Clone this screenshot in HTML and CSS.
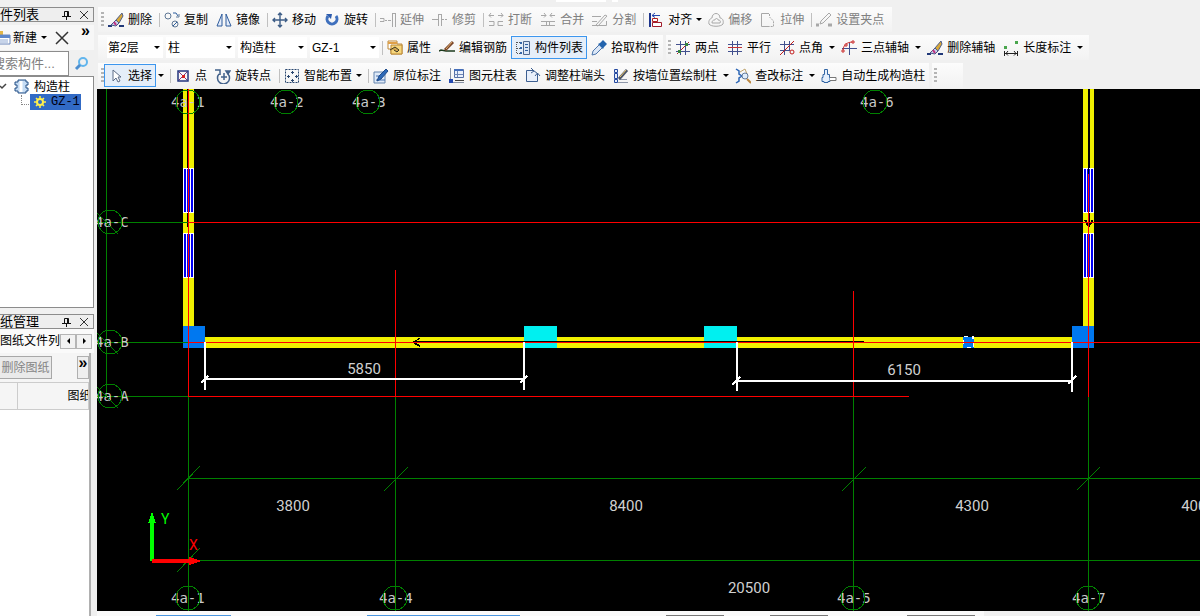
FILE: index.html
```html
<!DOCTYPE html>
<html lang="zh-CN">
<head>
<meta charset="utf-8">
<title>构造柱</title>
<link rel="stylesheet" href="styles.css">
</head>
<body>
<svg class="defs" aria-hidden="true">
  <symbol id="brush" viewBox="0 0 16 16"><path d="M0 14h4M11 14h5" stroke="#203878" stroke-width="2"/><path d="M3 13l5-5 3 3-3 3z" fill="#c9cfe6" stroke="#4a5788"/><path d="M6 10l2 3" stroke="#c03080" stroke-width="2"/><path d="M8 8l6-7 1 3-4 7z" fill="#d8a838" stroke="#50608c"/></symbol>
  <symbol id="copy" viewBox="0 0 16 16" fill="none" stroke="#5f7896"><circle cx="4" cy="4" r="3"/><circle cx="11" cy="12" r="3"/><path d="M9 14l4-4M9 1h3l2 3" stroke="#2e5f9f"/><path d="M12 5h3V2"/></symbol>
  <symbol id="mirror" viewBox="0 0 16 16" fill="#e4ecfa" stroke="#2f5c9c"><path d="M6 2v12H1zM10 2v12h5z"/></symbol>
  <symbol id="move" viewBox="0 0 16 16" fill="none" stroke="#3c5c86" stroke-width="1.4"><path d="M8 1v14M1 8h14M6 3l2-2 2 2M6 13l2 2 2-2M3 6L1 8l2 2M13 6l2 2-2 2"/></symbol>
  <symbol id="rotate" viewBox="0 0 16 16" fill="none" stroke="#3f70bd" stroke-width="3"><path d="M4 4a5 5 0 1 0 8 0"/><path d="M2 2l6 0-1 5z" fill="#2c5bac" stroke="none"/></symbol>
  <symbol id="extend" viewBox="0 0 16 16" fill="none" stroke="#a8a8a8"><path d="M0 6.500h4v3H0M5 8.500h2M8 8.500h3M12.500 1v14M15.500 1v14M12 1.500h3"/></symbol>
  <symbol id="trim" viewBox="0 0 16 16" fill="none" stroke="#a8a8a8"><path d="M0 7.500h6M6.500 2v12M9.500 2v12M10 7.500h2M13 7.500h2M6 2.500h3"/></symbol>
  <symbol id="break" viewBox="0 0 16 16" fill="none" stroke="#a8a8a8"><path d="M1 3.500h5M3 1L1 3.500l2 2M10 3.500h5M13 1l2 2.500-2 2M1 9.500h5v4H1M15 9.500h-5v4h5"/></symbol>
  <symbol id="join" viewBox="0 0 16 16" fill="none" stroke="#a8a8a8"><path d="M1 3.500h5M4 1l2 2.500-2 2M10 3.500h5M12 1l-2 2.500 2 2M1 9.500h14M1 13.500h14M6.500 9v4M9.500 9v4"/></symbol>
  <symbol id="split" viewBox="0 0 16 16" fill="none" stroke="#a8a8a8"><path d="M0 4.500h9M0 9.500h5M0 13.500h14.500V9M4 13L13 3l2 1L6 14z"/></symbol>
  <symbol id="align" viewBox="0 0 16 16" fill="none"><path d="M2 1v14" stroke="#1d348c" stroke-width="2"/><path d="M4 3.500h8M7 1L4 3.500l3 2" stroke="#2749b0"/><path d="M4.500 6.500h5v3h-5z" fill="#fff" stroke="#b02020"/><path d="M4.500 10.500h9v4h-9z" fill="#fff" stroke="#a01c2c"/></symbol>
  <symbol id="offset" viewBox="0 0 16 16" fill="none" stroke="#a8a8a8"><path d="M1 12c-1-4 2-6 3-6 0-6 8-6 8 0 2 0 4 2 3 6-2 3-12 3-14 0z"/><path d="M4 11c0-3 2-3 3-3 0-2 3-2 3 0 2 0 3 1 2 3z"/></symbol>
  <symbol id="stretch" viewBox="0 0 16 16" fill="none" stroke="#a8a8a8"><path d="M9 1.500H1.500v13H8"/><path d="M9.500 2v3l4 4v5.500H8" stroke-dasharray="2 1"/></symbol>
  <symbol id="grippt" viewBox="0 0 16 16" fill="none" stroke="#a8a8a8"><path d="M0 13h3M12 13h4" stroke-width="3"/><path d="M4 12l1-3 8-8 2 2-8 8z"/></symbol>
  <symbol id="prop" viewBox="0 0 16 16"><path d="M1 1h9v3h5v10H4V9H1z" fill="#fff" stroke="#c08a38"/><path d="M1 2h9v2H1z" fill="#e0a048"/><path d="M4 5h11v9H4z" fill="#f7d67c" stroke="#b98835"/><path d="M3 10l5-3 4 3-2 2-3-2" fill="#d0a54c" stroke="#3d3825"/></symbol>
  <symbol id="rebar" viewBox="0 0 16 16" fill="none"><path d="M0 11l2-1 5 1h9" stroke="#1d3a1d" stroke-width="1.500"/><path d="M6 10L14 2" stroke="#78452a" stroke-width="3"/><path d="M7 9l6-7" stroke="#e2b06e"/></symbol>
  <symbol id="list" viewBox="0 0 16 16" fill="none"><path d="M1.500 2v12M2 2.500h3M2 8.500h3M2 13.500h3" stroke="#555" stroke-dasharray="1 1"/><path d="M5 3h2M5 8h2M5 13h2" stroke="#3566a8" stroke-width="2"/><path d="M8.500 1.500h6v13h-6z" fill="#dce7f7" stroke="#50688e"/><path d="M10 4.500h3M10 7.500h3M10 10.500h3" stroke="#2e5f9f"/></symbol>
  <symbol id="pick" viewBox="0 0 16 16"><path d="M1 15l1-4 7-7 3 3-7 7z" fill="#dbe7f7" stroke="#4d76ac"/><path d="M7 4l2-1 3-3 4 4-3 3-1 2z" fill="#2464ad"/></symbol>
  <symbol id="twopt" viewBox="0 0 16 16" fill="none" stroke="#42508e"><path d="M1 4.500h14M1 11.500h14M5.500 1v14M10.500 1v14"/><path d="M2 14L14 2" stroke="#b52323"/><path d="M3 10h3v3H3zM10 3h3v3h-3z" fill="#37833b" stroke="none"/></symbol>
  <symbol id="parallel" viewBox="0 0 16 16" fill="none" stroke="#42508e"><path d="M5.500 1v14M10.500 1v14M1 4.500h14M1 11.500h14"/><path d="M1 7.500h14" stroke="#c63333"/></symbol>
  <symbol id="ptangle" viewBox="0 0 16 16" fill="none" stroke="#42508e"><path d="M1 4.500h14M1 10.500h10M5.500 1v14M10.500 1v9"/><path d="M1 15L15 1" stroke="#c21c1c"/><circle cx="13" cy="12" r="2" stroke="#c21c1c"/></symbol>
  <symbol id="threept" viewBox="0 0 16 16" fill="none" stroke="#42508e"><path d="M1 8.500h15M8.500 3v12"/><path d="M2 11C2 5 6 2 12 2" stroke="#c92a2a"/><path d="M1 10h2v2H1zM4 4h2v2H4zM11 1h2v2h-2z" fill="#fff" stroke="#c92a2a"/></symbol>
  <symbol id="length" viewBox="0 0 16 16" fill="none"><path d="M1 6h3v3H1zM12 1h3v3h-3z" fill="#4aa64e"/><path d="M1.500 11v5M14.500 11v5M2 13.500h13M5 11l-2 2.500 2 2M11 11l2 2.500-2 2" stroke="#222"/></symbol>
  <symbol id="cursor" viewBox="0 0 16 16"><path d="M5 2v11l3-3 2 4 2-1-2-4h3z" fill="#fff" stroke="#5d6c86"/></symbol>
  <symbol id="point" viewBox="0 0 16 16" fill="none"><path d="M3 3h10v10H3z" stroke="#23357e" stroke-width="1.5"/><path d="M4 4l8 8M12 4l-8 8" stroke="#7d3a7e"/><path d="M7 7h3v3H7z" fill="#d82222"/></symbol>
  <symbol id="rotpt" viewBox="0 0 16 16" fill="none" stroke="#42618b" stroke-width="1.5"><path d="M4 6a6 6 0 1 0 9 0M0 2h5v5M9 5v7M6 9h6"/><path d="M13 6l-2-3 4 0z" fill="#42618b"/></symbol>
  <symbol id="smart" viewBox="0 0 16 16" fill="none" stroke="#29466f"><path d="M1.500 1.500h13v13h-13z" stroke-dasharray="2 1"/><path d="M7 4.500h3M8.500 3v3M3 8.500h3M4.500 7v3M11 8.500h3M12.500 7v3M7 12.500h3M8.500 11v3"/></symbol>
  <symbol id="origin" viewBox="0 0 16 16"><path d="M1 4h11v11H1z" fill="#dfeaf8" stroke="#6584ad"/><path d="M3 12h9M3 8h4" stroke="#4570b0"/><path d="M4 13l2-5 7-7 2 2-7 8z" fill="#2d69b7" stroke="#204c8b"/></symbol>
  <symbol id="coltable" viewBox="0 0 16 16"><path d="M1.500 0v14.500H15" fill="none" stroke="#8792a5"/><path d="M5.500 1.500h9v8h-9z" fill="#e9f0fc" stroke="#5670a5"/><path d="M5 1h9v2H5z" fill="#4670bb"/><path d="M8.500 3v6M5 6.500h9" stroke="#6e86b5"/><path d="M0 11h4v4H0z" fill="#2449b0"/><path d="M6 12.500h9" stroke="#444"/></symbol>
  <symbol id="adjust" viewBox="0 0 16 16" fill="#e9f0fb" stroke="#3d5f91"><path d="M1.500 2.500h7l4 3v8h-11z"/><path d="M6 0l3 3-3 2M10 8l2.500-3L15 8" fill="none"/></symbol>
  <symbol id="wallcol" viewBox="0 0 16 16"><path d="M1.500 1.500h3v3h-3zM1.500 5.500h3v5h-3zM1.500 11.500h3v3h-3z" fill="#e6eefb" stroke="#2449a0"/><path d="M5 14.500h10M6 11.500h8" stroke="#8d96a8"/><path d="M6 11L14 2" stroke="#4b5568" stroke-width="3"/><path d="M7 9l6-7" stroke="#efc96c"/></symbol>
  <symbol id="check" viewBox="0 0 16 16" fill="none"><path d="M1 1l3 2v3l3 2-3 2v3l-3 2" stroke="#2b65b5" stroke-width="1.5"/><path d="M5 4l5-3 2 5" stroke="#bfa46e"/><circle cx="10" cy="8" r="3" fill="#e0edfb" stroke="#637c9d"/><path d="M12 11l4 4" stroke="#bb8740" stroke-width="2"/></symbol>
  <symbol id="auto" viewBox="0 0 16 16" fill="#e4effc" stroke="#3366a5"><path d="M3.500 1.500h3v5h2v3H9v4H7v1H3v-1H1v-4h1v-3h1.500z"/><path d="M9 9.500h6v3H9" stroke="#777" fill="#fff"/></symbol>
  <symbol id="new" viewBox="0 0 16 16"><path d="M0 1h7v5H0z" fill="#e2b649"/><path d="M2 5h12v9H2z" fill="#fff" stroke="#6b86bb"/><path d="M2 5h12v3H2z" fill="#5e87cc"/><path d="M4 10h8M4 12h8" stroke="#8ea8d4"/></symbol>
  <symbol id="lens" viewBox="0 0 16 16" fill="none"><circle cx="9" cy="6" r="4" stroke="#61b5ed" stroke-width="2"/><path d="M6 9l-4 4" stroke="#4d8fd0" stroke-width="3"/></symbol>
  <symbol id="column" viewBox="0 0 16 16" fill="#c5dcf4" stroke="#234f85"><path d="M5 1h8v2h2v3h-2v3h2v3h-2v2H5v-2H2V9h2V6H2V3h3z"/><path d="M8 2v11" stroke="#fff" stroke-width="3"/></symbol>
  <symbol id="gear" viewBox="0 0 16 16" fill="none" stroke="#fff04c"><circle cx="8" cy="8" r="3" stroke-width="2"/><path d="M8 2v3M8 11v3M2 8h3M11 8h3M4 4l2 2M12 4l-2 2M4 12l2-2M12 12l-2-2" stroke-width="1.5"/></symbol>
  <symbol id="pin" viewBox="0 0 12 12" fill="none" stroke="#111"><path d="M4.500 2.500h4v5h-4zM2 7.500h9M6.500 7v4M7.500 2v5"/></symbol>
  <symbol id="close" viewBox="0 0 12 12"><path d="M2 2l8 8M10 2l-8 8" stroke="#333"/></symbol>
</svg>
<div class="app">
  <aside class="side">
    <section class="panel upper">
      <header class="title"><h2>件列表</h2><button aria-label="固定"><svg><use href="#pin"/></svg></button><button aria-label="关闭"><svg><use href="#close"/></svg></button></header>
      <div class="tools"><svg class="ic"><use href="#new"/></svg><button class="dd">新建</button><button class="del" aria-label="删除构件"><svg class="ic"><use href="#close"/></svg></button><button class="more" aria-label="更多">»</button></div>
      <div class="search"><input type="text" aria-label="搜索构件" placeholder="搜索构件..."><button aria-label="搜索"><svg class="ic"><use href="#lens"/></svg></button></div>
      <ul class="tree">
        <li><svg class="tick" viewBox="0 0 8 8"><path d="M0 3l2 2 4-4" fill="none" stroke="#444" stroke-width="1.5"/></svg><svg class="ic"><use href="#column"/></svg>构造柱</li>
        <li class="leaf"><span class="branch"></span><a href="#gz1"><svg class="ic"><use href="#gear"/></svg>GZ-1</a></li>
      </ul>
    </section>
    <section class="panel lower">
      <header class="title"><h2>纸管理</h2><button aria-label="固定"><svg><use href="#pin"/></svg></button><button aria-label="关闭"><svg><use href="#close"/></svg></button></header>
      <div class="tabs"><span class="tab">图纸文件列表</span><button class="spin left" aria-label="向左"></button><button class="spin right" aria-label="向右"></button></div>
      <div class="files">
        <div class="filebar"><button class="remove" disabled>删除图纸</button><button class="more" aria-label="更多">»</button></div>
        <table><thead><tr><th class="num"></th><th>图纸</th></tr></thead></table>
      </div>
    </section>
  </aside>
  <main class="main">
    <div class="toprow"><i></i><i class="short"></i></div>
    <nav class="bars">
      <div class="row">
        <div class="bar"><i class="grip"></i>
          <button class="b"><svg class="ic"><use href="#brush"/></svg>删除</button><i class="sep"></i>
          <button class="b"><svg class="ic"><use href="#copy"/></svg>复制</button>
          <button class="b"><svg class="ic"><use href="#mirror"/></svg>镜像</button><i class="sep"></i>
          <button class="b"><svg class="ic"><use href="#move"/></svg>移动</button>
          <button class="b"><svg class="ic"><use href="#rotate"/></svg>旋转</button><i class="sep"></i>
          <button class="b" disabled><svg class="ic"><use href="#extend"/></svg>延伸</button>
          <button class="b" disabled><svg class="ic"><use href="#trim"/></svg>修剪</button><i class="sep"></i>
          <button class="b" disabled><svg class="ic"><use href="#break"/></svg>打断</button>
          <button class="b" disabled><svg class="ic"><use href="#join"/></svg>合并</button>
          <button class="b" disabled><svg class="ic"><use href="#split"/></svg>分割</button><i class="sep"></i>
          <button class="b dd"><svg class="ic"><use href="#align"/></svg>对齐</button>
          <button class="b" disabled><svg class="ic"><use href="#offset"/></svg>偏移</button>
          <button class="b" disabled><svg class="ic"><use href="#stretch"/></svg>拉伸</button><i class="sep"></i>
          <button class="b" disabled><svg class="ic"><use href="#grippt"/></svg>设置夹点</button>
        </div>
      </div>
      <div class="row">
        <div class="bar">
          <div class="combos">
            <label class="combo small"><select aria-label="楼层"><option>第2层</option></select></label>
            <label class="combo"><select aria-label="构件类型"><option>柱</option></select></label>
            <label class="combo"><select aria-label="构件类别"><option>构造柱</option></select></label>
            <label class="combo"><select aria-label="构件名称"><option>GZ-1</option></select></label>
          </div><i class="sep"></i>
          <button class="b"><svg class="ic"><use href="#prop"/></svg>属性</button>
          <button class="b"><svg class="ic"><use href="#rebar"/></svg>编辑钢筋</button>
          <button class="b on"><svg class="ic"><use href="#list"/></svg>构件列表</button>
          <button class="b"><svg class="ic"><use href="#pick"/></svg>拾取构件</button>
        </div>
        <div class="bar"><i class="grip"></i>
          <button class="b"><svg class="ic"><use href="#twopt"/></svg>两点</button>
          <button class="b"><svg class="ic"><use href="#parallel"/></svg>平行</button>
          <button class="b"><svg class="ic"><use href="#ptangle"/></svg>点角</button><button class="arrow" aria-label="点角选项"></button>
          <button class="b"><svg class="ic"><use href="#threept"/></svg>三点辅轴</button><button class="arrow" aria-label="三点辅轴选项"></button>
          <button class="b"><svg class="ic"><use href="#brush"/></svg>删除辅轴</button>
          <button class="b"><svg class="ic"><use href="#length"/></svg>长度标注</button><button class="arrow" aria-label="长度标注选项"></button>
        </div>
      </div>
      <div class="row wide">
        <div class="bar"><i class="grip"></i>
          <button class="b on"><svg class="ic"><use href="#cursor"/></svg>选择</button><button class="arrow" aria-label="选择选项"></button><i class="sep"></i>
          <button class="b"><svg class="ic"><use href="#point"/></svg>点</button>
          <button class="b"><svg class="ic"><use href="#rotpt"/></svg>旋转点</button><i class="sep"></i>
          <button class="b dd"><svg class="ic"><use href="#smart"/></svg>智能布置</button><i class="sep"></i>
          <button class="b"><svg class="ic"><use href="#origin"/></svg>原位标注</button>
          <button class="b"><svg class="ic"><use href="#coltable"/></svg>图元柱表</button>
          <button class="b"><svg class="ic"><use href="#adjust"/></svg>调整柱端头</button>
          <button class="b"><svg class="ic"><use href="#wallcol"/></svg>按墙位置绘制柱</button><button class="arrow" aria-label="绘制柱选项"></button>
          <button class="b"><svg class="ic"><use href="#check"/></svg>查改标注</button><button class="arrow" aria-label="查改标注选项"></button>
          <button class="b"><svg class="ic"><use href="#auto"/></svg>自动生成构造柱</button>
        </div>
        <div class="bar empty"><i class="grip"></i></div>
      </div>
    </nav>
    <div class="canvas">
      <svg class="plan" role="img" aria-label="构造柱平面图">
        <g transform="translate(-97 -89)" shape-rendering="crispEdges">
          <g class="yellow"><path d="M183 89h11v248h-11zM1083 89h11v248h-11zM205 337h867v11H205z"/></g>
          <path d="M187 89h1v138h-1zM1088 89h2v138h-2zM413 341h451v1H413z"/>
          <g id="win"><path class="white" d="M183 168h11v45h-11z"/><path class="navy" d="M184 169h2v43h-2zM187 169h3v43h-3zM191 169h2v43h-2z"/></g>
          <use href="#win" y="65"/><use href="#win" x="900"/><use href="#win" x="900" y="65"/>
          <path d="M1088 168h1v6h-1z"/>
          <path class="cyan" d="M524 326h33v22h-33zM704 326h33v22h-33z"/>
          <path d="M524 341h33v1h-33zM704 341h33v1h-33z"/>
          <path class="blue" d="M183 326h22v22h-22zM1072 326h22v22h-22zM963 337h11v11h-11z"/>
          <path class="white" d="M964 336h4v1h-4zM972 336h2v3h-2zM963 340h1v4h-1zM973 343h1v4h-1zM967 347h4v1h-4z"/>
          <path d="M413 341h2v-1h2v-1h1v-1h2v1h-1v1h-2v1h-1v2h1v1h2v1h1v2h-1v-1h-2v-1h-2v-1h-1v-1h-1zM1084 220h3v2h4v-2h2v2l-3 4h-3z"/>
          <path class="green" d="M106 89h1v308h-1zM97 222h91v1H97zM97 342h91v1H97zM97 396h91v1H97zM188 396h1v215h-1zM395 396h1v215h-1zM853 396h1v215h-1zM1088 396h1v215h-1zM188 478h2000v1H188zM188 560h2000v1H188z"/>
          <g class="tags"><text x="171" y="107">4a-1</text><text x="270" y="107">4a-2</text><text x="352" y="107">4a-3</text><text x="860" y="107">4a-6</text><text x="95" y="227">4a-C</text><text x="95" y="347">4a-B</text><text x="95" y="401">4a-A</text><text x="171" y="603">4a-1</text><text x="379" y="603">4a-4</text><text x="837" y="603">4a-5</text><text x="1072" y="603">4a-7</text></g>
          <g class="outline"><circle cx="188" cy="102" r="12"/><circle cx="286" cy="102" r="12"/><circle cx="368" cy="102" r="12"/><circle cx="875" cy="102" r="12"/><circle cx="110" cy="222" r="12"/><circle cx="110" cy="342" r="12"/><circle cx="110" cy="396" r="12"/><circle cx="188" cy="598" r="12"/><circle cx="395" cy="598" r="12"/><circle cx="853" cy="598" r="12"/><circle cx="1088" cy="598" r="12"/>
            <path d="M97 213l21 21M97 333l21 21M97 387l21 21M177 490l23-24M384 491l24-24M842 491l24-24M1077 490l23-23M177 572l23-24"/></g>
          <path class="red" d="M188 89h1v308h-1zM189 222h2000v1H189zM188 342h2000v1H188zM188 396h721v1H188zM395 270h1v126h-1zM853 291h1v105h-1zM1088 174h1v223h-1z"/>
          <path class="white" d="M204 342h2v48h-2zM523 342h2v48h-2zM205 378h319v2H205zM736 342h2v49h-2zM1071 342h2v50h-2zM737 380h335v2H737z"/>
          <path class="tickmark" d="M201 383l7-7M520 383l7-7M732 385l8-8M1068 384l8-8"/>
          <path class="lime" d="M150 561v-38h-2l4-11 4 11h-2v38z"/>
          <path class="red" d="M152 559h37v-2l12 4-12 4v-2h-37z"/>
          <g class="dims"><text x="364" y="374">5850</text><text x="904" y="375">6150</text><text x="293" y="511">3800</text><text x="626" y="511">8400</text><text x="972" y="511">4300</text><text x="1198" y="511">4000</text><text x="749" y="593">20500</text></g>
          <text class="axis lime" x="161" y="524">Y</text><text class="axis red" x="189" y="550">X</text>
        </g>
      </svg>
    </div>
    <footer class="strip"><span class="s1"></span><span class="s2"></span><span class="s3"></span><span class="s4"></span><span class="s5"></span></footer>
  </main>
</div>
</body>
</html>
```
FILE: styles.css
```css
* { box-sizing: border-box; }
body { margin: 0; background: #f0f0f0; color: #000; font: 12px/16px "Liberation Sans", "Noto Sans CJK SC", sans-serif; }
button, input, select { font: inherit; color: inherit; margin: 0; padding: 0; border: 0; background: none; border-radius: 0; }
button { display: flex; align-items: center; justify-content: center; white-space: nowrap; }
.defs { display: none; }
.ic { width: 16px; height: 16px; flex: none; }
.app { display: grid; grid-template-columns: 97px minmax(0, 1fr); min-height: 100vh; }

.side { display: flex; flex-direction: column; gap: 6px; padding: 7px 3px 0 0; overflow: hidden; }
.panel { display: flex; flex-direction: column; min-width: 0; }
.title { display: flex; align-items: center; height: 15px; border: 1px solid #8c8c8c; border-left: 0; background: #eee; padding-right: 3px; gap: 6px; }
.title h2 { flex: 1; margin: 0; font: inherit; font-size: 13px; white-space: nowrap; }
.title svg { width: 12px; height: 12px; }
.tools { display: flex; align-items: center; height: 25px; margin-top: 3px; padding-right: 4px; background: #f7f7f7; }
.tools > .ic { margin-left: -4px; }
.tools .dd { margin-left: 1px; }
.tools .del { margin-left: 6px; }
.tools .del .ic { width: 18px; height: 18px; }
.more { font-size: 16px; line-height: 12px; font-weight: bold; }
.tools .more { margin-left: auto; align-self: flex-start; }
.search { display: flex; height: 25px; margin-top: 1px; }
.search input { width: 69px; border: 1px solid #8c8c8c; border-left: 0; background: #fff; text-indent: -8px; font-size: 13px; overflow: hidden; }
.search input::placeholder { color: #808080; opacity: 1; }
.search button { flex: 1; }
.upper { height: 301px; }
.tree { flex: 1; margin: 0; padding: 2px 0; list-style: none; background: #fff; border: 1px solid #8c8c8c; border-left: 0; }
.tree li { display: flex; align-items: center; height: 15px; gap: 5px; }
.tick { width: 8px; height: 8px; }
.branch { width: 10px; height: 10px; margin: -4px -6px 0 21px; border: 1px dotted #888; border-width: 0 0 1px 1px; }
.tree a { display: flex; align-items: center; gap: 3px; width: 51px; height: 16px; padding-left: 2px; background: #316ac5; color: #001; text-decoration: none; font: 12px "Liberation Mono", monospace; }

.lower { flex: 1; }
.tabs { display: flex; align-items: center; height: 24px; padding-right: 2px; background: #fafafa; }
.tab { flex: 1; overflow: hidden; white-space: nowrap; }
.spin { width: 16px; height: 15px; border: 1px solid #b5b5b5; background: #f2f2f2; }
.spin::before { content: ""; border: 3px solid transparent; }
.left::before { border-right-color: #000; border-left-width: 0; }
.right::before { border-left-color: #000; border-right-width: 0; }
.files { flex: 1; width: 91px; background: #fff; border-right: 2px solid #b0b0b0; }
.filebar { display: flex; justify-content: space-between; height: 29px; padding: 3px 0; background: #f5f5f5; }
.remove { width: 52px; border: 1px solid #a8a8a8; border-left: 0; color: #858585; background: #eaeaea; }
.filebar .more { align-items: flex-start; width: 12px; border: 1px solid #b0b0b0; background: #eee; }
.files table { width: 100%; border-collapse: collapse; table-layout: fixed; }
.files th { height: 27px; padding: 0; border: 1px solid #ccc; border-left: 0; background: #f5f5f5; font-weight: normal; text-align: left; text-indent: 50px; overflow: hidden; white-space: nowrap; }
.files .num { width: 17px; }

.main { display: flex; flex-direction: column; min-width: 0; }
.toprow { display: flex; gap: 6px; height: 7px; padding-left: 459px; }
.toprow i { width: 50px; height: 2px; background: #fff; }
.toprow .short { width: 6px; }
.bars { display: grid; gap: 3px; padding: 0 0 1px 1px; }
.row { display: flex; gap: 3px; height: 25px; overflow: hidden; }
.bar { display: flex; align-items: center; background: linear-gradient(#fcfcfc, #f2f2f2); }
.bar:last-child { padding-right: 4px; }
.grip { flex: none; width: 3px; height: 15px; margin: 0 0 0 3px; background: repeating-linear-gradient(#b4b4b4 0 2px, transparent 2px 4px); }
.bar + .bar .grip { margin-left: 2px; }
.sep { flex: none; width: 4px; height: 14px; border-right: 1px solid #c0c0c0; }
.wide .sep { width: 5px; }
.b { flex: none; gap: 4px; height: 23px; padding: 0 4px; }
.b:disabled { color: #808080; }
.b.on { padding: 0 3px; border: 1px solid #3c96ee; background: #e5eef9; }
.arrow { flex: none; width: 10px; height: 23px; }
.dd::after, .arrow::before, .combo::after { content: ""; border: 3px solid transparent; border-top-color: #000; border-bottom-width: 0; }
.b.dd { padding-right: 2px; }
.tools .dd { gap: 4px; }
.combos { display: flex; gap: 3px; padding-left: 9px; }
.combo { display: flex; align-items: center; width: 69px; height: 21px; padding: 0 3px 0 2px; background: #fff; }
.small { width: 56px; padding-left: 1px; }
.combo select { flex: 1; min-width: 0; height: 21px; appearance: none; outline: 0; }
.empty { width: 31px; }

.canvas { flex: 1; min-height: 0; background: #000; overflow: hidden; }
.plan { display: block; width: 100%; height: 100%; min-height: 522px; }
.yellow { fill: #f0f000; }
.white { fill: #fff; }
.navy { fill: #0000f0; }
.cyan { fill: #00f0f0; }
.blue { fill: #0078f0; }
.green { fill: #008000; }
.red { fill: #f00; }
.lime { fill: #0f0; }
.outline { fill: none; stroke: #008000; }
.tickmark { fill: none; stroke: #fff; stroke-width: 2; }
.tags { fill: #c8c8c8; font: 14px "DejaVu Sans Mono", monospace; }
.dims { fill: #d0d0d0; font: 15px Roboto, sans-serif; text-anchor: middle; }
.axis { font: 14px Roboto, sans-serif; }
.strip { display: flex; align-items: flex-end; height: 5px; width: 887px; max-width: 100%; padding-left: 59px; background: #fafafa; }
.strip span { height: 1px; background: #777; }
.strip .s1 { width: 75px; background: #4a96e0; }
.strip .s2 { width: 153px; margin-left: 136px; background: #4a96e0; }
.strip .s3 { width: 58px; margin-left: 146px; }
.strip .s4 { width: 58px; margin-left: 46px; }
.strip .s5 { width: 68px; margin-left: 79px; }
```
